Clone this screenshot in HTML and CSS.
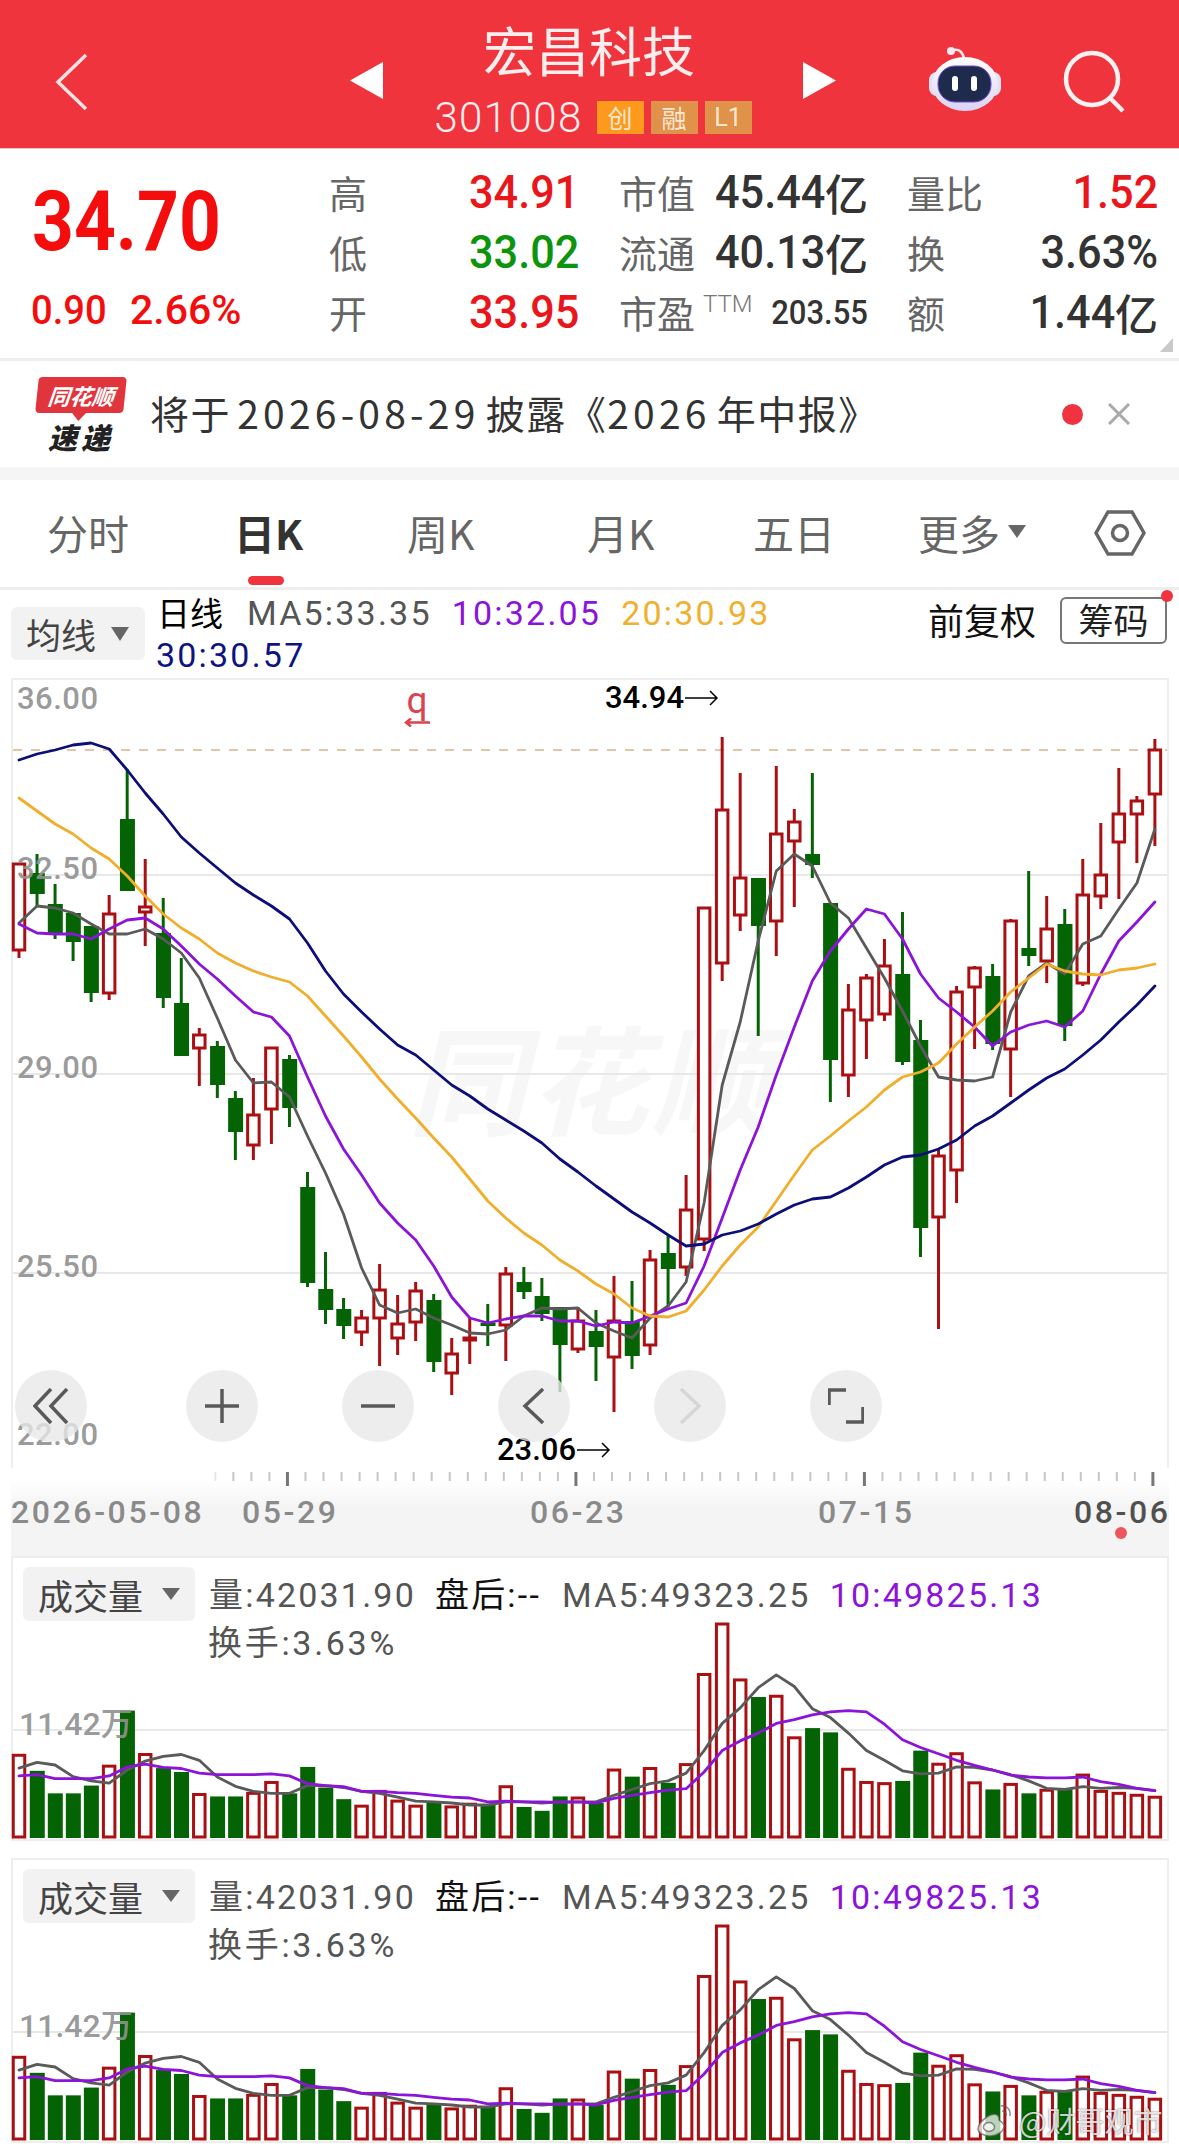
FILE: index.html
```html
<!DOCTYPE html>
<html lang="zh">
<head>
<meta charset="utf-8">
<title>宏昌科技</title>
<link rel="stylesheet" href="styles.css">
</head>
<body>
<div class="app">
  <header class="top">
    <svg class="back" viewBox="0 0 33 58"><path d="M31 2 3 29l28 27"/></svg>
    <svg class="tri" viewBox="0 0 33 37"><path d="M33 0v37L0 18.500z"/></svg>
    <div class="top-mid">
      <div class="name">宏昌科技</div>
      <div class="code-row">
        <span class="code">301008</span>
        <span class="badge badge-a">创</span>
        <span class="badge badge-b">融</span>
        <span class="badge badge-b">L1</span>
      </div>
    </div>
    <svg class="tri" viewBox="0 0 33 37"><path d="M0 0v37l33-18.500z"/></svg>
    <svg class="robot" viewBox="0 0 72 66">
      <defs>
        <linearGradient id="head" x1="0" y1="0" x2="0" y2="1"><stop offset="0" stop-color="#fff"/><stop offset="1" stop-color="#d9d4f4"/></linearGradient>
      </defs>
      <path class="robot-ant" d="M25 3c5-1 9 2 10 9"/>
      <circle class="robot-ball" cx="22" cy="4" r="4"/>
      <rect class="robot-ear" x="0" y="25" width="72" height="24" rx="8"/>
      <ellipse cx="36" cy="37" rx="33" ry="27" fill="url(#head)"/>
      <rect class="robot-face" x="9" y="19" width="53" height="36" rx="17"/>
      <rect class="robot-eye" x="23" y="29" width="6" height="15" rx="3"/>
      <rect class="robot-eye" x="42" y="29" width="6" height="15" rx="3"/>
    </svg>
    <svg class="search" viewBox="0 0 64 64"><circle cx="29" cy="29" r="26"/><path d="m47 48 13 13"/></svg>
  </header>

  <section class="quote">
    <div class="price">
      <div class="last"><span class="squeeze">34.70</span></div>
      <div class="chg"><span class="squeeze">0.90</span><span class="squeeze">2.66%</span></div>
    </div>
    <div class="stats">
      <div class="cell"><span class="lbl">高</span><span class="val up"><span class="digits">34.91</span></span></div>
      <div class="cell"><span class="lbl">市值</span><span class="val"><span class="digits">45.44</span><span class="unit">亿</span></span></div>
      <div class="cell"><span class="lbl">量比</span><span class="val up"><span class="digits">1.52</span></span></div>
      <div class="cell"><span class="lbl">低</span><span class="val down"><span class="digits">33.02</span></span></div>
      <div class="cell"><span class="lbl">流通</span><span class="val"><span class="digits">40.13</span><span class="unit">亿</span></span></div>
      <div class="cell"><span class="lbl">换</span><span class="val"><span class="digits">3.63%</span></span></div>
      <div class="cell"><span class="lbl">开</span><span class="val up"><span class="digits">33.95</span></span></div>
      <div class="cell"><span class="lbl">市盈<sup class="ttm">TTM</sup></span><span class="val val-small"><span class="digits">203.55</span></span></div>
      <div class="cell"><span class="lbl">额</span><span class="val"><span class="digits">1.44</span><span class="unit">亿</span></span></div>
    </div>
    <i class="corner"></i>
  </section>

  <section class="news">
    <div class="logo">
      <div class="logo-tag"><span>同花顺</span></div>
      <div class="logo-sub">速递</div>
    </div>
    <div class="news-text">将于 <span class="news-num">2026-08-29</span> 披露《<span class="news-num">2026</span> 年中报》</div>
    <i class="news-dot"></i>
    <svg class="news-x" viewBox="0 0 24 22"><path d="m2 1 20 20M22 1 2 21"/></svg>
  </section>

  <nav class="tabs">
    <span class="tab">分时</span>
    <span class="tab tab-on">日K</span>
    <span class="tab">周K</span>
    <span class="tab">月K</span>
    <span class="tab">五日</span>
    <span class="tab">更多<i class="caret"></i></span>
    <svg class="hex" viewBox="0 0 52 46"><path d="M14 2h24l12 21-12 21H14L2 23z"/><circle cx="26" cy="23" r="7.500"/></svg>
  </nav>

  <div class="chart-head">
    <div class="pick pick-ma">均线<i class="pick-caret"></i></div>
    <div class="ma-text">
      <span class="ma-cn">日线</span><span class="ma c-gray">MA5:33.35</span><span class="ma c-purple">10:32.05</span><span class="ma c-orange">20:30.93</span><span class="ma ma-last c-navy">30:30.57</span>
    </div>
    <div class="fq">前复权</div>
    <div class="chips">筹码<i class="chips-dot"></i></div>
  </div>

  <div class="chart">
    <div class="wm">同花顺</div>
    <svg id="kline" class="plot" viewBox="13 679 1154 788"></svg>
    <span class="ylab y1">36.00</span>
    <span class="ylab y2">32.50</span>
    <span class="ylab y3">29.00</span>
    <span class="ylab y4">25.50</span>
    <span class="ylab y5">22.00</span>
    <div class="qmark"><span>q</span><svg viewBox="0 0 26 9"><path d="M26 4.500H2m5-4-5 4 5 4"/></svg></div>
    <span class="ext ext-hi">34.94<svg viewBox="0 0 34 16"><path d="M0 8h32m-7-7 7 7-7 7"/></svg></span>
    <span class="ext ext-lo">23.06<svg viewBox="0 0 34 16"><path d="M0 8h32m-7-7 7 7-7 7"/></svg></span>
    <div class="ctrls">
      <button class="ctl"><svg viewBox="0 0 36 36"><path d="M18 1 2 18l16 17M34 1 18 18l16 17"/></svg></button>
      <button class="ctl"><svg viewBox="0 0 36 36"><path d="M18 1v34M1 18h34"/></svg></button>
      <button class="ctl"><svg viewBox="0 0 36 36"><path d="M1 18h34"/></svg></button>
      <button class="ctl"><svg viewBox="0 0 36 36"><path d="M27 1 9 18l18 17"/></svg></button>
      <button class="ctl ctl-off"><svg viewBox="0 0 36 36"><path d="m9 1 18 17L9 35"/></svg></button>
      <button class="ctl"><svg viewBox="0 0 36 36"><path d="M18 2H1v15M35 19v15H18"/></svg></button>
    </div>
  </div>

  <div class="axis">
    <svg id="ticks" class="ticks" viewBox="13 0 1154 16"></svg>
    <div class="dates">
      <span class="date">2026-05-08</span>
      <span class="date">05-29</span>
      <span class="date">06-23</span>
      <span class="date">07-15</span>
      <span class="date date-now">08-06</span>
    </div>
    <i class="axis-dot"></i>
  </div>

  <div class="vol vol-first">
    <svg class="plot-vol" viewBox="13 0 1154 283"></svg>
    <div class="vol-head">
      <div class="pick pick-vol">成交量<i class="pick-caret"></i></div>
      <div class="vol-text"><span class="vt c-gray">量:42031.90</span><span class="vt c-black">盘后:--</span><span class="vt c-gray">MA5:49323.25</span><span class="vt c-purple">10:49825.13</span><span class="vt vt-last c-gray">换手:3.63%</span></div>
    </div>
    <span class="vlab">11.42万</span>
  </div>

  <div class="vol">
    <svg class="plot-vol" viewBox="13 0 1154 283"></svg>
    <div class="vol-head">
      <div class="pick pick-vol">成交量<i class="pick-caret"></i></div>
      <div class="vol-text"><span class="vt c-gray">量:42031.90</span><span class="vt c-black">盘后:--</span><span class="vt c-gray">MA5:49323.25</span><span class="vt c-purple">10:49825.13</span><span class="vt vt-last c-gray">换手:3.63%</span></div>
    </div>
    <span class="vlab">11.42万</span>
  </div>

  <div class="mark">
    <svg viewBox="0 0 40 34"><path d="M24 13c-1-2-6-3-11 1-5 3-9 8-9 12 0 4 6 7 12 7s14-4 14-10c0-4-5-5-5-6 0-2 0-3-1-4z"/><ellipse cx="15" cy="24" rx="5.500" ry="4.500"/><path class="mark-arc" d="M27 3c5-1 10 3 9 10M28 8c3 0 5 2 4 5"/></svg>
    <span>@财哥观市</span>
  </div>
</div>
<script src="chart.js"></script>
</body>
</html>
```
FILE: styles.css
```css
* { box-sizing: border-box; }
html, body { margin: 0; padding: 0; background: #fff; }
body { width: 1179px; height: 2149px; overflow: hidden; font-family: "Noto Sans CJK SC", "Noto Sans", sans-serif; color: #333; }
i { display: block; font-style: normal; }
.app { width: 1179px; height: 2149px; position: relative; overflow: hidden; }

/* header */
.top { height: 149px; background: #f0343e; display: flex; align-items: center; padding-left: 55px; border-bottom: 1px solid #d9d0d0; }
.back { width: 33px; height: 58px; margin-top: 16px; fill: none; stroke: #fbe3e4; stroke-width: 3.500; flex: none; }
.tri { width: 33px; height: 37px; fill: #fff; margin-top: 12px; flex: none; }
.back + .tri { margin-left: 262px; }
.top-mid { width: 420px; display: flex; flex-direction: column; align-items: center; color: #fff; }
.name { font-size: 53px; line-height: 60px; margin-top: 4px; margin-left: -8px; color: #fdeeee; }
.code-row { display: flex; align-items: center; margin-top: 22px; height: 33px; margin-left: 0; }
.code { font-family: Roboto, sans-serif; font-weight: 300; font-size: 42px; line-height: 33px; margin-right: 14px; color: #fdeeee; letter-spacing: 1.400px; }
.badge { width: 47px; height: 33px; margin-right: 7px; font-size: 25px; line-height: 33px; text-align: center; font-family: "Noto Sans CJK SC", sans-serif; color: #fce7cf; }
.badge-a { background: #fd9a1d; }
.badge-b { background: #e0914a; }
.badge:last-child { margin-right: 0; font-family: Roboto, sans-serif; }
.robot { width: 72px; height: 66px; margin-left: 93px; margin-top: 12px; flex: none; }
.robot-ant { fill: none; stroke: #f3e9ef; stroke-width: 2.500; }
.robot-ball { fill: #f3eaf2; }
.robot-ear { fill: #e3e0f6; }
.robot-face { fill: #1f2b4d; stroke: #6f4fd2; stroke-width: 1; }
.robot-eye { fill: #fff; }
.search { width: 64px; height: 64px; margin-left: 62px; margin-top: 16px; fill: none; stroke: #fdf1f1; stroke-width: 4.500; flex: none; }

/* quote */
.quote { height: 212px; display: flex; border-bottom: 3px solid #eeeeee; position: relative; padding-top: 13px; }
.price { width: 329px; padding-left: 31px; color: #f40d0d; }
.squeeze { display: inline-block; transform-origin: left center; }
.last { font-family: Roboto, sans-serif; font-weight: 700; font-size: 84px; line-height: 84px; margin-top: 18px; padding-left: 1px; }
.last .squeeze { transform: scaleX(.87); }
.chg { font-family: Roboto, sans-serif; font-weight: 500; font-size: 41px; line-height: 48px; margin-top: 22px; display: flex; }
.chg .squeeze { transform: scaleX(.93); width: 99px; }
.chg .squeeze:last-child { transform: scaleX(1); }
.stats { display: grid; grid-template-columns: 250px 249px 250px; column-gap: 40px; grid-auto-rows: 60px; }
.stats .cell:nth-child(3n) { margin-left: -1px; }
.cell { display: flex; justify-content: space-between; align-items: center; position: relative; }
.lbl { font-size: 38px; color: #666; line-height: 60px; white-space: nowrap; }
.ttm { font-family: Roboto, sans-serif; font-weight: 300; font-size: 24px; vertical-align: 16px; line-height: 0; margin-left: 8px; color: #777; }
.val { display: flex; align-items: center; justify-content: flex-end; font-family: Roboto, sans-serif; font-weight: 500; font-size: 46px; color: #333; }
.digits { display: inline-block; transform-origin: right center; transform: scaleX(.94); white-space: nowrap; margin-left: -20px; }
.unit { font-family: "Noto Sans CJK SC", sans-serif; font-size: 43px; line-height: 50px; font-weight: 500; margin-left: 0; }
.val-small { font-size: 33px; }
.up { color: #e9171c; }
.down { color: #0c940c; }
.corner { position: absolute; right: 6px; bottom: 6px; width: 0; height: 0; border-left: 13px solid transparent; border-bottom: 14px solid #c9c9c9; }

/* news */
.news { display: flex; align-items: center; border-bottom: 13px solid #f5f5f5; height: 119px; }
.logo { width: 88px; margin-left: 37px; flex: none; }
.logo-tag { height: 36px; background: #e1353d; transform: skewX(-6deg); border-radius: 4px; color: #fff; font-size: 22px; font-weight: 700; line-height: 36px; text-align: center; position: relative; }
.logo-tag span { display: block; font-style: italic; }
.logo-tag::after { content: ""; position: absolute; left: 37px; bottom: -8px; border-left: 7px solid transparent; border-right: 7px solid transparent; border-top: 8px solid #e1353d; }
.logo-sub { font-size: 29px; line-height: 30px; margin-top: 8px; font-weight: 900; font-style: italic; text-align: center; color: #222; letter-spacing: 4px; }
.news-text { font-size: 39px; line-height: 50px; color: #333; margin-left: 25px; margin-top: -4px; flex: none; white-space: nowrap; width: 912px; letter-spacing: 1.500px; word-spacing: -4px; }
.news-num { letter-spacing: 4.200px; }
.news-dot { width: 21px; height: 21px; border-radius: 50%; background: #ef3340; flex: none; }
.news-x { width: 24px; height: 22px; fill: none; stroke: #aaa; stroke-width: 3; flex: none; margin-left: 24px; }

/* tabs */
.tabs { height: 110px; display: grid; grid-template-columns: 187px 173px 180px 166px 165px 176px 52px; padding-left: 47px; align-items: center; border-bottom: 3px solid #eeeeee; padding-bottom: 2px; }
.tab { font-size: 41px; line-height: 50px; color: #666; display: flex; align-items: center; white-space: nowrap; position: relative; height: 104px; padding-bottom: 2px; }
.tab-on { color: #333; font-weight: 700; }
.tab-on::after { content: ""; position: absolute; left: 14px; bottom: 0; width: 36px; height: 9px; border-radius: 5px; background: #f0343e; }
.caret { width: 0; height: 0; margin-left: 8px; border-left: 9px solid transparent; border-right: 9px solid transparent; border-top: 13px solid #666; }
.hex { width: 52px; height: 46px; fill: none; stroke: #666; stroke-width: 3.500; }

/* chart head */
.chart-head { height: 88px; position: relative; display: flex; padding-left: 11px; }
.pick { background: #f2f2f2; border-radius: 6px; display: flex; align-items: center; color: #444; }
.pick-ma { width: 134px; height: 53px; margin-top: 17px; padding-left: 15px; font-size: 35px; flex: none; }
.pick-caret { width: 0; height: 0; border-left: 9px solid transparent; border-right: 9px solid transparent; border-top: 14px solid #666; margin-left: 15px; }
.ma-text { width: 642px; margin-left: 12px; display: flex; flex-wrap: wrap; align-content: flex-start; flex: none; }
.ma-cn { font-size: 33px; line-height: 44px; color: #000; margin-right: 24px; }
.ma { font-family: Roboto, sans-serif; font-size: 34px; line-height: 44px; letter-spacing: 2.200px; margin-right: 20px; margin-top: 1px; }
.ma-last { flex-basis: 100%; margin-top: 1px; line-height: 39px; margin-left: -1px; }
.c-gray { color: #555; }
.c-purple { color: #8b14d8; }
.c-orange { color: #f0b02f; }
.c-navy { color: #0f1380; }
.c-black { color: #111; }
.fq { font-size: 36px; line-height: 50px; color: #111; margin-left: 129px; margin-top: 4px; flex: none; width: 108px; }
.chips { width: 107px; height: 47px; margin-left: 24px; margin-top: 7px; border: 2px solid #777; border-radius: 6px; font-size: 35px; line-height: 40px; text-align: center; color: #222; position: relative; flex: none; }
.chips-dot { position: absolute; right: -8px; top: -9px; width: 12px; height: 12px; border-radius: 50%; background: #f2323f; }

/* k chart */
.chart { height: 792px; margin: 0 10px 0 11px; border: 2px solid #eeeeee; position: relative; }
.plot { display: block; width: 1154px; height: 788px; overflow: visible; position: relative; }
.wm { position: absolute; left: 395px; top: 330px; font-size: 118px; line-height: 130px; font-weight: 700; font-style: italic; color: #f7f7f7; white-space: nowrap; letter-spacing: 4px; }
.grid-line { stroke: #e8e8e8; stroke-width: 2; }
.dash-line { stroke: #d9b48e; stroke-width: 1.500; stroke-dasharray: 9 9; }
.wick-r { stroke: #aa0f12; stroke-width: 3; }
.wick-g { stroke: #046404; stroke-width: 3; }
.body-r { fill: #fff; stroke: #aa0f12; stroke-width: 3; }
.body-g { fill: #046404; }
.ma-line { fill: none; stroke-width: 2.800; stroke-linejoin: round; stroke-linecap: round; }
.l-gray { stroke: #5a5a5a; }
.l-purple { stroke: #8b14d8; }
.l-orange { stroke: #f0ae2c; }
.l-navy { stroke: #0c0f78; }
.ylab { position: absolute; left: 4px; font-family: Roboto, sans-serif; font-weight: 500; font-size: 31px; line-height: 36px; color: rgba(145,145,145,.92); letter-spacing: .5px; }
.y1 { top: 1px; }
.y2 { top: 171px; }
.y3 { top: 370px; }
.y4 { top: 569px; }
.y5 { top: 737px; }
.qmark { position: absolute; left: 391px; top: 6px; width: 26px; text-align: center; font-family: Roboto, sans-serif; font-weight: 400; font-size: 37px; line-height: 30px; color: #d9444f; }
.qmark span { display: block; height: 32px; }
.qmark svg { display: block; width: 26px; height: 9px; fill: none; stroke: #d9444f; stroke-width: 2.500; }
.ext { position: absolute; font-family: Roboto, sans-serif; font-weight: 500; font-size: 31px; line-height: 36px; color: #000; display: flex; align-items: center; white-space: nowrap; }
.ext svg { width: 34px; height: 16px; fill: none; stroke: #000; stroke-width: 1.500; margin-left: 1px; }
.ext-hi { left: 592px; top: 0; }
.ext-lo { left: 484px; top: 752px; }
.ctrls { position: absolute; left: 2px; top: 690px; display: flex; gap: 84px; }
.ctl { width: 72px; height: 72px; border-radius: 50%; border: 0; padding: 18px; background: rgba(232,232,232,.78); }
.ctl svg { display: block; width: 36px; height: 36px; fill: none; stroke: #595959; stroke-width: 3.500; }
.ctl-off svg { stroke: #d6d6d6; }
.ctl:first-child { margin-right: 15px; }

/* axis */
.axis { height: 88px; background: linear-gradient(#fff 0, #fff 12px, #f4f4f4 40px); position: relative; margin: -2px 10px 0 11px; padding-top: 4px; }
.ticks { display: block; width: 1158px; height: 16px; overflow: visible; margin-left: -2px; }
.tick { stroke: #c6c6c6; stroke-width: 2; }
.tick-faint { stroke: #e6e6e6; stroke-width: 2; }
.tick-big { stroke: #777; stroke-width: 3; }
.dates { display: flex; margin-top: 4px; font-family: Roboto, sans-serif; font-weight: 500; font-size: 32px; line-height: 40px; color: #8a8a8a; letter-spacing: 2.600px; }
.date { flex: none; width: 94px; white-space: nowrap; margin-left: 194px; }
.date:first-child { width: 191px; margin-left: 0; }
.date:nth-child(2) { margin-left: 40px; }
.date-now { margin-left: 162px; color: #505050; }
.axis-dot { position: absolute; left: 1104px; top: 59px; width: 12px; height: 12px; border-radius: 50%; background: #ef555e; }

/* volume */
.vol { height: 285px; margin: 0 10px 0 11px; border: 2px solid #eeeeee; position: relative; }
.vol-first { margin-bottom: 17px; }
.vol:last-of-type { height: 300px; }
.plot-vol { display: block; width: 1154px; height: 283px; overflow: visible; }
.vol-head { position: absolute; left: 10px; top: 9px; display: flex; }
.pick-vol { width: 172px; height: 54px; padding-left: 15px; font-size: 35px; flex: none; }
.pick-vol .pick-caret { margin-left: 19px; border-top-width: 12px; }
.vol-text { width: 940px; margin-left: 14px; display: flex; flex-wrap: wrap; align-content: flex-start; padding-top: 4px; }
.vt { font-family: Roboto, "Noto Sans CJK SC", sans-serif; font-size: 34px; line-height: 48px; letter-spacing: 2.200px; margin-right: 19px; white-space: nowrap; }
.vt:nth-child(3) { margin-left: 2px; }
.vt-last { flex-basis: 100%; margin-left: -1px; letter-spacing: 2.700px; }
.vlab { position: absolute; left: 6px; top: 148px; font-family: Roboto, "Noto Sans CJK SC", sans-serif; font-weight: 500; font-size: 32px; line-height: 36px; color: rgba(145,145,145,.92); }

/* weibo mark */
.mark { position: absolute; left: 974px; top: 2101px; display: flex; align-items: center; color: rgba(255,255,255,.78); font-size: 29px; line-height: 38px; text-shadow: 0 0 2px rgba(0,0,0,.6); white-space: nowrap; }
.mark svg { width: 40px; height: 34px; fill: rgba(255,255,255,.72); stroke: rgba(90,90,90,.7); stroke-width: 1.500; margin-right: 5px; }
.mark-arc { fill: none; }
```
FILE: chart.js
```js
var NS = 'http://www.w3.org/2000/svg';
var STEP = 18.03, X0 = 19, W = 14.5;
function xAt(i) { return X0 + STEP * i; }
function el(parent, name, attrs) {
  var n = document.createElementNS(NS, name);
  for (var k in attrs) n.setAttribute(k, attrs[k]);
  parent.appendChild(n);
  return n;
}
function poly(svg, ys, cls, map) {
  var pts = ys.map(function (y, i) { return xAt(i).toFixed(1) + ',' + (map ? map(y) : y).toFixed(1); }).join(' ');
  el(svg, 'polyline', { points: pts, 'class': 'ma-line ' + cls });
}

/* type, high, body top, body bottom, low (page pixels) */
var K = [
['r',863,863,949,957],['g',853,872,893,905],['g',883,903,933,938],['g',912,912,941,960],
['g',925,925,992,1001],['r',894,913,992,999],['g',768,818,890,890],['r',858,906,911,945],
['g',897,932,997,1007],['g',957,1002,1055,1055],['r',1027,1034,1047,1085],['g',1040,1045,1084,1097],
['g',1090,1097,1131,1159],['r',1077,1114,1144,1159],['r',1047,1047,1108,1143],['g',1054,1058,1107,1126],
['g',1171,1186,1282,1286],['g',1251,1288,1309,1323],['g',1297,1308,1325,1338],['r',1309,1317,1331,1345],
['r',1263,1289,1317,1365],['r',1294,1323,1337,1354],['r',1281,1290,1321,1340],['g',1293,1299,1361,1371],
['r',1337,1353,1372,1394],['r',1317,1337,1339,1363],['g',1303,1322,1325,1345],['r',1266,1273,1324,1360],
['g',1266,1281,1291,1298],['g',1277,1295,1313,1320],['g',1306,1306,1344,1391],['r',1306,1320,1348,1352],
['g',1309,1330,1346,1380],['r',1275,1320,1356,1411],['g',1280,1320,1355,1368],['r',1249,1259,1344,1354],
['g',1234,1252,1268,1306],['r',1174,1209,1266,1275],['r',907,907,1238,1250],['r',736,809,962,980],
['r',772,877,914,930],['g',877,877,925,1035],['r',765,833,920,955],['r',808,821,840,906],
['g',772,853,864,877],['g',902,902,1059,1101],['r',983,1009,1074,1096],['r',973,977,1019,1058],
['r',938,965,1013,1020],['g',911,973,1061,1064],['g',1019,1039,1227,1256],['r',1149,1155,1216,1328],
['r',985,991,1169,1202],['r',965,967,986,1048],['g',963,975,1043,1049],['r',918,920,1048,1096],
['g',870,947,955,965],['r',895,928,960,982],['g',908,923,1025,1040],['r',858,894,982,985],
['r',822,874,895,908],['r',767,813,841,898],['r',795,800,813,862],['r',738,749,793,845]
];
var MA5 = [922,905,907,912,923,933,933,928,938,952,977,1017,1059,1082,1081,1096,1135,1172,1213,1267,1304,1312,1308,1317,1324,1332,1333,1329,1315,1307,1308,1307,1322,1330,1337,1317,1305,1281,1202,1084,1021,940,870,853,865,902,917,947,977,1010,1045,1076,1079,1080,1076,1011,975,962,973,943,935,908,882,828];
var MA10 = [923,932,933,933,938,928,919,917,928,945,963,978,995,1011,1016,1035,1076,1115,1148,1174,1202,1222,1239,1265,1296,1317,1322,1318,1315,1315,1320,1320,1325,1321,1322,1315,1308,1302,1265,1217,1169,1126,1074,1026,980,950,928,908,913,938,973,997,1011,1026,1045,1031,1024,1020,1026,1010,973,940,921,901];
var MA20 = [797,810,823,833,847,858,875,895,913,927,938,952,962,970,976,981,995,1015,1035,1056,1078,1098,1117,1137,1156,1178,1200,1217,1232,1244,1259,1270,1283,1293,1307,1315,1316,1310,1289,1265,1244,1226,1200,1174,1149,1135,1120,1106,1089,1076,1071,1062,1043,1026,1010,991,977,963,970,973,974,969,967,963];
var MA30 = [759,753,749,744,742,748,769,792,813,836,852,867,882,894,905,918,942,970,993,1011,1028,1044,1054,1069,1084,1095,1108,1119,1130,1142,1158,1171,1185,1198,1211,1222,1234,1245,1243,1234,1230,1223,1213,1204,1198,1196,1187,1176,1164,1156,1154,1148,1139,1125,1115,1102,1089,1077,1068,1054,1039,1021,1004,985];

/* volume: read off as offsets on a 2.575x scale, base 765 */
var VOL = [
['r',552],['g',592],['g',650],['g',650],['g',630],['r',580],['g',437],['r',550],['g',585],['g',595],['r',653],['g',658],['g',658],['r',650],['r',622],['g',650],['g',582],['g',635],['g',665],['r',683],['r',645],['r',670],['r',683],['g',672],['r',685],['r',678],['g',680],['r',633],['g',685],['g',695],['g',658],['r',662],['g',675],
['r',590],['g',607],['r',586],['g',623],['r',576],['r',344],['r',214],['r',358],['g',402],['r',400],['r',507],['g',482],['g',493],['r',588],['r',622],['r',625],['g',618],['g',540],['r',575],['r',548],['r',623],['g',640],['r',627],['g',650],['r',642],['g',640],['r',603],['r',645],['r',650],['r',655],['r',660]
];
var VMA5 = [585,570,577,607,618,624,590,567,555,550,565,608,632,645,650,650,630,630,635,645,650,660,670,672,675,680,680,672,672,675,672,672,672,655,640,625,618,598,540,470,430,378,345,375,432,455,495,540,565,592,600,598,582,583,590,602,618,637,640,633,637,635,637,643];
var VMA10 = [605,602,612,612,612,605,582,575,583,586,598,602,602,602,600,605,625,630,633,645,645,648,650,655,660,662,672,670,672,672,673,672,675,663,655,648,642,638,595,540,515,495,470,460,448,440,437,440,472,512,532,548,565,578,590,603,608,610,610,608,620,627,637,643];

function hollow(svg, x, top, bottom) {
  el(svg, 'rect', { x: x - W / 2 + 1.5, y: top, width: W - 3, height: bottom - top, 'class': 'body-r' });
}

function drawKline(svg) {
  [874, 1073, 1272].forEach(function (y) {
    el(svg, 'line', { x1: 13, x2: 1167, y1: y, y2: y, 'class': 'grid-line' });
  });
  el(svg, 'line', { x1: 13, x2: 1167, y1: 749, y2: 749, 'class': 'dash-line' });
  K.forEach(function (c, i) {
    var x = xAt(i), red = c[0] === 'r';
    el(svg, 'line', { x1: x, x2: x, y1: c[1], y2: c[4], 'class': red ? 'wick-r' : 'wick-g' });
    if (red) {
      hollow(svg, x, c[2], c[3]);
    } else {
      el(svg, 'rect', { x: x - W / 2, y: c[2], width: W + .5, height: c[3] - c[2], 'class': 'body-g' });
    }
  });
  poly(svg, MA5, 'l-gray');
  poly(svg, MA10, 'l-purple');
  poly(svg, MA20, 'l-orange');
  poly(svg, MA30, 'l-navy');
}

function drawVolume(svg) {
  var base = 280;
  var map = function (z) { return base - (765 - z) / 2.575; };
  el(svg, 'line', { x1: 13, x2: 1167, y1: 172, y2: 172, 'class': 'grid-line' });
  VOL.forEach(function (v, i) {
    var x = xAt(i), top = map(v[1]);
    if (v[0] === 'r') {
      hollow(svg, x, top, base - 1);
    } else {
      el(svg, 'rect', { x: x - W / 2, y: top, width: W + .5, height: base - top, 'class': 'body-g' });
    }
  });
  poly(svg, VMA5, 'l-gray', map);
  poly(svg, VMA10, 'l-purple', map);
}

function drawTicks(svg) {
  for (var i = 11; i < K.length; i++) {
    var big = (i - 15) % 16 === 0;
    var cls = big ? 'tick-big' : (i === 11 ? 'tick-faint' : 'tick');
    el(svg, 'line', { x1: xAt(i), x2: xAt(i), y1: 0, y2: big ? 14 : 9, 'class': cls });
  }
}

drawKline(document.getElementById('kline'));
drawTicks(document.getElementById('ticks'));
Array.prototype.forEach.call(document.querySelectorAll('.plot-vol'), drawVolume);
```
